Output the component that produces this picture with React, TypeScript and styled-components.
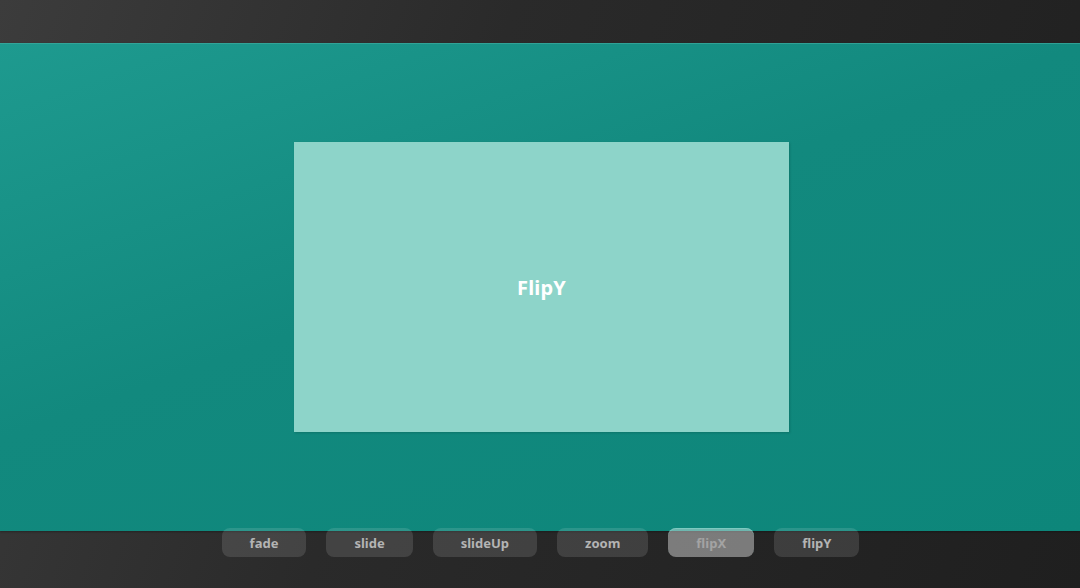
import React, { useState } from 'react';
import styled, { createGlobalStyle } from 'styled-components';

const EFFECTS = ['fade', 'slide', 'slideUp', 'zoom', 'flipX', 'flipY'];

const GlobalStyle = createGlobalStyle`
	html, body {
		margin: 0;
		padding: 0;
		height: 100%;
	}
	body {
		font-family: 'Noto Sans', 'Open Sans', sans-serif;
		background: linear-gradient(110deg, #3c3c3c 0%, #2a2a2a 40%, #1f1f1f 100%);
	}
	#root {
		height: 100%;
	}
`;

const App = () => {
	const [active, setActive] = useState('flipX');

	return (
		<>
			<GlobalStyle />
			<PageWrapper>
				<Stage>
					<Card>
						<CardTitle>FlipY</CardTitle>
					</Card>
				</Stage>
				<ButtonRow>
					{EFFECTS.map((name) => (
						<EffectButton key={name} $active={name === active} onClick={() => setActive(name)}>
							{name}
						</EffectButton>
					))}
				</ButtonRow>
			</PageWrapper>
		</>
	);
};
export default App;

const PageWrapper = styled.div`
	width: 100%;
	height: 588px;
	display: flex;
	flex-direction: column;
	padding-top: 43px;
	box-sizing: border-box;
	overflow: hidden;
`;

const Stage = styled.div`
	height: 488px;
	flex-shrink: 0;
	display: flex;
	align-items: center;
	justify-content: center;
	background: linear-gradient(160deg, #1e9a8f 0%, #12897e 45%, #0d867a 100%);
	box-shadow: inset 0 1px 0 rgba(60, 170, 158, 0.7), 0 1px 2px rgba(0, 0, 0, 0.3);
`;

const Card = styled.div`
	width: 495px;
	height: 290px;
	margin-left: 3px;
	display: flex;
	align-items: center;
	justify-content: center;
	background-color: #8dd4c9;
	box-shadow: 1px 1px 2px rgba(0, 60, 50, 0.25);
`;

const CardTitle = styled.h2`
	margin: 0;
	font-size: 20px;
	font-weight: 700;
	color: #ffffff;
	letter-spacing: 0.2px;
`;

const ButtonRow = styled.div`
	display: flex;
	justify-content: center;
	gap: 20px;
	margin-top: -3px;
	margin-left: 1px;
`;

const EffectButton = styled.button<{ $active: boolean }>`
	height: 29px;
	padding: 0 28px;
	border: none;
	border-radius: 8px;
	font-family: 'Noto Sans', 'Open Sans', sans-serif;
	font-size: 13px;
	font-weight: 700;
	cursor: pointer;
	background-color: ${({ $active }) => ($active ? 'rgba(255, 255, 255, 0.4)' : 'rgba(255, 255, 255, 0.12)')};
	color: ${({ $active }) => ($active ? '#a3a3a3' : '#b4b4b4')};
	box-shadow: ${({ $active }) => ($active ? 'inset 0 1px 0 rgba(140, 220, 210, 0.5)' : 'none')};
`;
